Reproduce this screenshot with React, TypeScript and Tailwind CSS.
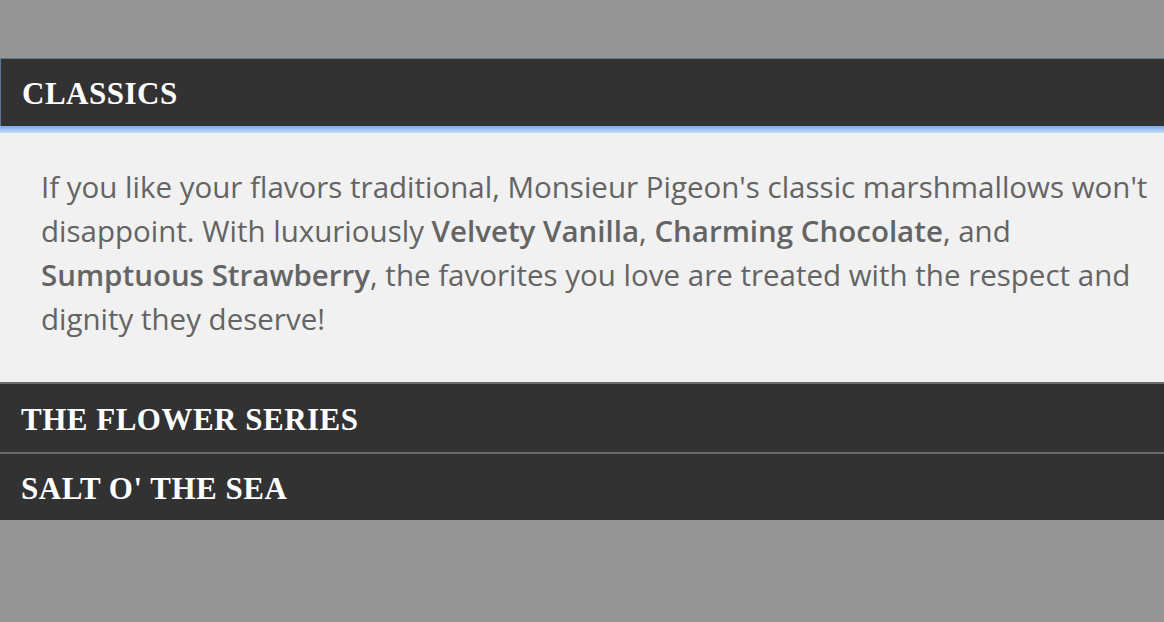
import { FC, ReactNode } from "react"

const serif = "font-['Liberation_Serif',Georgia,serif]"

const Header: FC<{ children: ReactNode; className?: string }> = ({ children, className }) => (
  <div
    className={`flex items-center bg-[#323232] pl-[21px] pt-[2px] text-[31px] font-bold leading-none tracking-[0.5px] text-white ${serif} ${className ?? ""}`}
  >
    {children}
  </div>
)

export default function App() {
  return (
    <div className="h-[622px] overflow-hidden bg-[#959595] pt-[58px]">
      <section className="w-full">
        {/* Open item */}
        <Header className="h-[68px] border-t border-l border-[#5d7896]">CLASSICS</Header>
        <div className="h-[7px] bg-gradient-to-b from-[#79abee] to-[#c9def7]" />
        <div className="bg-[#f1f1f1] pl-[41px] pt-[32px] pb-[41px]">
          <p className="whitespace-nowrap font-['Open_Sans',sans-serif] text-[29.5px] leading-[44px] text-[#646464]">
            If you like your flavors traditional, Monsieur Pigeon's classic marshmallows won't
            <br />
            disappoint. With luxuriously <b className="font-semibold">Velvety Vanilla</b>,{" "}
            <b className="font-semibold">Charming Chocolate</b>, and
            <br />
            <b className="font-semibold">Sumptuous Strawberry</b>, the favorites you love are
            treated with the respect and
            <br />
            dignity they deserve!
          </p>
        </div>

        {/* Closed items */}
        <Header className="h-[70px] border-t-2 border-[#6a6a6a]">THE FLOWER SERIES</Header>
        <Header className="h-[68px] border-t-2 border-[#6a6a6a]">SALT O' THE SEA</Header>
      </section>
    </div>
  )
}
